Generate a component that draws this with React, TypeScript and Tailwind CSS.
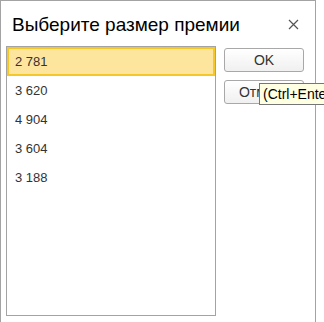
const values = ["2 781", "3 620", "4 904", "3 604", "3 188"];

const App = () => {
	return (
		<div
			className="relative w-[324px] h-[322px] overflow-hidden bg-white"
			style={{ fontFamily: '"Liberation Sans", Arial, sans-serif' }}
		>
			<div className="w-[316px] h-[340px] border border-[#a3a3a3] border-b-0 bg-white flex flex-col">
				<div className="flex items-center justify-between h-[45px] pl-[11px] pr-[16px]">
					<span className="text-[19px] text-black leading-none pt-[1px]">
						Выберите размер премии
					</span>
					<svg width="11" height="11" viewBox="0 0 11 11" className="mt-[1px]">
						<path d="M1 1 L10 10 M10 1 L1 10" stroke="#555" strokeWidth="1.2" />
					</svg>
				</div>
				<div className="flex gap-[8px] pl-[5px]">
					<div className="w-[210px] h-[270px] border border-[#a3a3a3] flex flex-col">
						{values.map((v, i) => (
							<div
								key={i}
								className={
									i === 0
										? "h-[29px] flex items-center pl-[6px] border-2 border-[#f6c728] bg-[#fee59e] text-[13px] text-[#333]"
										: "h-[29px] flex items-center pl-[8px] text-[13px] text-[#333]"
								}
							>
								{v}
							</div>
						))}
					</div>
					<div className="flex flex-col gap-[8px] pt-[2px]">
						<button className="w-[80px] h-[24px] rounded-[3px] border border-[#a8a8a8] bg-gradient-to-b from-white to-[#f0f0f0] text-[14px] text-[#333]">
							OK
						</button>
						<button className="w-[80px] h-[24px] rounded-[3px] border border-[#a8a8a8] bg-gradient-to-b from-white to-[#f0f0f0] text-[14px] text-[#333]">
							Отмена
						</button>
					</div>
				</div>
			</div>
			<div className="absolute left-[259px] top-[83px] h-[22px] border border-[#767676] bg-[#ffffe1] pl-[3px] pr-[4px] flex items-center text-[14px] text-black whitespace-nowrap">
				(Ctrl+Enter)
			</div>
		</div>
	);
};

export default App;
